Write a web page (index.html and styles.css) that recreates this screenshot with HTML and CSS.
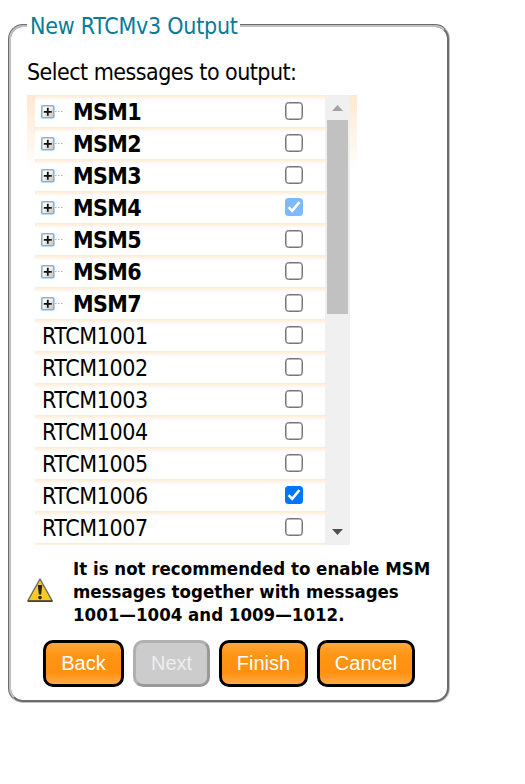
FILE: index.html
```
<!DOCTYPE html>
<html lang="en">
<head>
    <meta charset="UTF-8">
    <title>New RTCMv3 Output</title>
    <link rel="stylesheet" href="styles.css">
</head>
<body>
    <!-- shared icons -->
    <svg class="defs" width="0" height="0">
        <linearGradient id="plus-bg" x1="0" y1="0" x2="1" y2="1">
            <stop offset="0.3" stop-color="#fff"/>
            <stop offset="1" stop-color="#c6beb0"/>
        </linearGradient>
        <linearGradient id="warn-bg" x1="0" y1="0" x2="0" y2="1">
            <stop offset="0" stop-color="#f2c94a"/>
            <stop offset="1" stop-color="#fccb12"/>
        </linearGradient>
        <symbol id="expand" viewBox="0 0 22 14">
            <rect x="0.8" y="0.8" width="12" height="12" rx="1" fill="url(#plus-bg)" stroke="#8eb0d0" stroke-width="1.6"/>
            <path d="M2.8 6.8h8M6.8 2.8v8" stroke="#111" stroke-width="1.8"/>
            <path d="M14 6.5h8" stroke="#bbb" stroke-width="1.2" stroke-dasharray="1.6 1.4"/>
        </symbol>
    </svg>

    <fieldset class="wizard">
        <legend>New RTCMv3 Output</legend>
        <p class="prompt">Select messages to output:</p>

        <div class="list-box">
            <div class="list">
                <label class="row group"><svg class="expand"><use href="#expand"/></svg><span class="name">MSM1</span><input type="checkbox"></label>
                <label class="row group"><svg class="expand"><use href="#expand"/></svg><span class="name">MSM2</span><input type="checkbox"></label>
                <label class="row group"><svg class="expand"><use href="#expand"/></svg><span class="name">MSM3</span><input type="checkbox"></label>
                <label class="row group"><svg class="expand"><use href="#expand"/></svg><span class="name">MSM4</span><input type="checkbox" class="partial" checked></label>
                <label class="row group"><svg class="expand"><use href="#expand"/></svg><span class="name">MSM5</span><input type="checkbox"></label>
                <label class="row group"><svg class="expand"><use href="#expand"/></svg><span class="name">MSM6</span><input type="checkbox"></label>
                <label class="row group"><svg class="expand"><use href="#expand"/></svg><span class="name">MSM7</span><input type="checkbox"></label>
                <label class="row"><span class="name">RTCM1001</span><input type="checkbox"></label>
                <label class="row"><span class="name">RTCM1002</span><input type="checkbox"></label>
                <label class="row"><span class="name">RTCM1003</span><input type="checkbox"></label>
                <label class="row"><span class="name">RTCM1004</span><input type="checkbox"></label>
                <label class="row"><span class="name">RTCM1005</span><input type="checkbox"></label>
                <label class="row"><span class="name">RTCM1006</span><input type="checkbox" checked></label>
                <label class="row"><span class="name">RTCM1007</span><input type="checkbox"></label>
                <div class="row"></div>
            </div>
            <div class="scrollbar">
                <svg class="arrow up" viewBox="0 0 11 6"><path d="M0 6L5.5 0L11 6z"/></svg>
                <div class="thumb"></div>
                <svg class="arrow down" viewBox="0 0 11 6"><path d="M0 0h11L5.5 6z"/></svg>
            </div>
        </div>

        <div class="warning">
            <svg class="warning-icon" viewBox="0 0 26 24">
                <path d="M13 1L25.3 23H0.7z" fill="url(#warn-bg)" stroke="#6b665c" stroke-width="1.4" stroke-linejoin="round"/>
                <path d="M1 23.2h24.2" stroke="#3f3929" stroke-width="1.4"/>
                <path d="M10.8 7h4.4l-1 9.5h-2.4z" fill="#292414"/>
                <circle cx="13" cy="19.6" r="1.8" fill="#292414"/>
            </svg>
            <p class="warning-text">It is not recommended to enable MSM<br>messages together with messages<br>1001—1004 and 1009—1012.</p>
        </div>

        <div class="buttons">
            <button class="btn back">Back</button>
            <button class="btn next" disabled>Next</button>
            <button class="btn finish">Finish</button>
            <button class="btn cancel">Cancel</button>
        </div>
    </fieldset>
</body>
</html>
```
FILE: styles.css
```
body {
    margin: 0;
    padding: 11px 8px;
    background-color: #fff;
    color: #000;
    font-family: Tahoma, "DejaVu Sans Condensed", "DejaVu Sans", sans-serif;
    font-size: 23px;
}

.defs {
    position: absolute;
}

.wizard {
    box-sizing: border-box;
    width: 442px;
    height: 692px;
    margin: 0;
    padding: 0 16px;
    border: 3px groove #c0c0c0;
    border-radius: 15px;
}

.wizard legend {
    padding: 2px 2px 0 3px;
    color: #087b98;
    line-height: 27px;
    letter-spacing: -0.25px;
}

.wizard .prompt {
    margin: 17px 0 8px;
    line-height: 30px;
    letter-spacing: -0.53px;
}

.list-box {
    display: flex;
    box-sizing: border-box;
    width: 330px;
    height: 450px;
    padding: 0 7px 0 8px;
    background: linear-gradient(#ffe8cf, #fff 75px);
}

.list {
    width: 290px;
    height: 450px;
    overflow: hidden;
}

.row {
    display: flex;
    align-items: center;
    box-sizing: border-box;
    height: 32px;
    padding: 0 22px 0 7px;
    background: linear-gradient(#ffe8cf, #fff 5px);
}

.row .name {
    flex: 1;
    padding-top: 2px;
    line-height: 30px;
    letter-spacing: -0.4px;
}

.row.group {
    padding-left: 6px;
    font-weight: bold;
}

.row.group .name {
    letter-spacing: -0.6px;
}

.expand {
    width: 22px;
    height: 14px;
    margin: 2px 10px 0 0;
}

.row input {
    appearance: none;
    box-sizing: border-box;
    width: 18px;
    height: 18px;
    margin: 0;
    border: 1.5px solid #767676;
    border-radius: 3.5px;
    background-color: #fff;
    box-shadow: inset 0 0 0 0.5px #767676;
}

.row input:checked {
    border: none;
    box-shadow: none;
    background: #0075ff url("data:image/svg+xml,%3Csvg xmlns='http://www.w3.org/2000/svg' viewBox='0 0 18 18'%3E%3Cpath d='M3.6 9.2L7.2 12.8L14.4 4.2' fill='none' stroke='white' stroke-width='2.6'/%3E%3C/svg%3E");
}

.row .partial {
    opacity: 0.5;
}

.scrollbar {
    display: flex;
    flex-direction: column;
    align-items: center;
    width: 25px;
    height: 450px;
    background-color: #f0f0f0;
}

.arrow {
    width: 11px;
    height: 6px;
}

.arrow.up {
    margin: 10px 0 9px;
    fill: #a3a3a3;
}

.arrow.down {
    margin: auto 0 10px;
    fill: #505050;
}

.thumb {
    width: 21px;
    height: 194px;
    background-color: #c1c1c1;
}

.warning {
    display: flex;
    align-items: center;
    margin-top: 12px;
}

.warning-icon {
    width: 26px;
    height: 24px;
    margin: 0 20px 3px 0;
}

.warning-text {
    margin: 0;
    font-size: 18.5px;
    font-weight: bold;
    line-height: 23px;
    white-space: nowrap;
}

.buttons {
    display: flex;
    gap: 9px;
    margin: 14px 0 0 16px;
}

.btn {
    box-sizing: border-box;
    height: 47px;
    padding: 0;
    border: 3px solid #000;
    border-radius: 10px;
    background: linear-gradient(#ffa940, #ff9514 28%, #ff9010 72%, #ffab48);
    color: #fff;
    font-family: Arial, "Liberation Sans", sans-serif;
    font-size: 20px;
}

.back {
    width: 81px;
}

.next {
    width: 77px;
    border-color: #b0b0b0 #999 #999 #b0b0b0;
    background: #ccc;
    color: #eee;
}

.finish {
    width: 89px;
}

.cancel {
    width: 98px;
}
```
